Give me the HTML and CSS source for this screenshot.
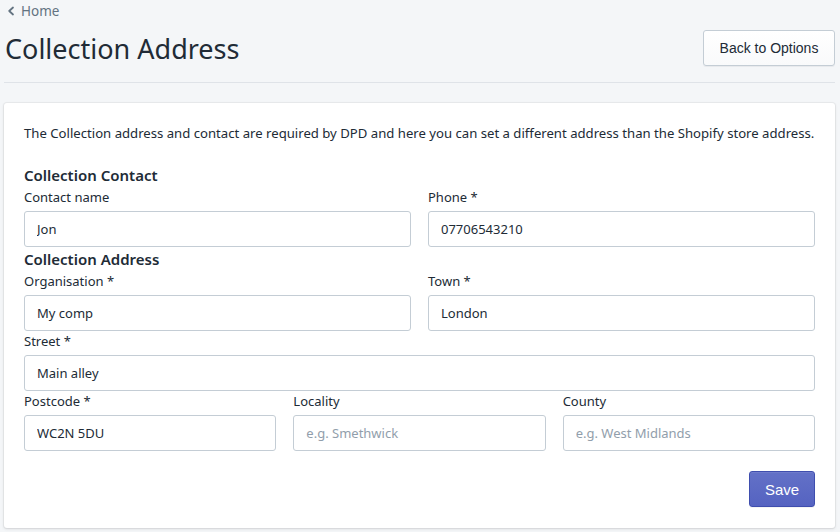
FILE: index.html
```html
<!DOCTYPE html>
<html>
<head>
<meta charset="utf-8">
<link rel="stylesheet" href="styles.css">
</head>
<body>
<div class="page">
  <nav class="breadcrumb">
    <svg class="chev" width="10" height="10" viewBox="0 0 10 10"><path d="M7 1.5 L3.2 5 L7 8.5" fill="none" stroke="#637381" stroke-width="1.8" stroke-linecap="round" stroke-linejoin="round"/></svg>
    <span>Home</span>
  </nav>
  <header class="header">
    <h1 class="title">Collection Address</h1>
    <button class="btn">Back to Options</button>
  </header>
  <div class="divider"></div>
  <section class="card">
    <p class="intro">The Collection address and contact are required by DPD and here you can set a different address than the Shopify store address.</p>
    <h2 class="heading">Collection Contact</h2>
    <div class="row two">
      <div class="field"><label class="label">Contact name</label><input class="input" value="Jon"></div>
      <div class="field"><label class="label">Phone *</label><input class="input" value="07706543210"></div>
    </div>
    <h2 class="heading">Collection Address</h2>
    <div class="row two">
      <div class="field"><label class="label">Organisation *</label><input class="input" value="My comp"></div>
      <div class="field"><label class="label">Town *</label><input class="input" value="London"></div>
    </div>
    <div class="row one">
      <div class="field"><label class="label">Street *</label><input class="input" value="Main alley"></div>
    </div>
    <div class="row three">
      <div class="field"><label class="label">Postcode *</label><input class="input" value="WC2N 5DU"></div>
      <div class="field"><label class="label">Locality</label><input class="input" placeholder="e.g. Smethwick"></div>
      <div class="field"><label class="label">County</label><input class="input" placeholder="e.g. West Midlands"></div>
    </div>
    <div class="actions"><button class="btn primary">Save</button></div>
  </section>
</div>
</body>
</html>
```
FILE: styles.css
```css
html, body { margin: 0; padding: 0; }
body {
  background: #f4f6f8;
  font-family: "Noto Sans", "Open Sans", sans-serif;
  color: #212b36;
  width: 840px;
  height: 532px;
  overflow: hidden;
}
.page { padding: 0 5px 0 4px; }
.breadcrumb {
  display: flex;
  align-items: center;
  gap: 5px;
  height: 22px;
  padding-left: 2px;
  font-size: 13.5px;
  color: #637381;
}
.chev { display: block; }
.header {
  display: flex;
  align-items: center;
  justify-content: space-between;
  margin-top: 8px;
  height: 36px;
}
.title {
  margin: 0;
  font-size: 27px;
  font-weight: 400;
  line-height: 36px;
  padding-left: 1px;
  position: relative;
  top: 1px;
}
.btn {
  font-family: "Liberation Sans", Arial, sans-serif;
  font-size: 14px;
  height: 36px;
  padding: 0;
  white-space: nowrap;
  box-sizing: border-box;
  border-radius: 3px;
  border: 1px solid #c4cdd5;
  background: linear-gradient(#fff, #f9fafb);
  color: #212b36;
  box-shadow: 0 1px 0 0 rgba(22,29,37,.05);
  width: 132px;
}
.divider {
  border-top: 1px solid #dfe3e8;
  margin-top: 16px;
}
.card {
  margin-top: 20px;
  background: #fff;
  border-radius: 3px;
  box-shadow: 0 0 0 1px rgba(63,63,68,.05), 0 1px 3px 0 rgba(63,63,68,.15);
  padding: 20px;
  height: 425px;
  box-sizing: border-box;
}
.intro {
  margin: 0 0 20px;
  font-size: 13.15px;
  line-height: 20px;
  white-space: nowrap;
}
.heading {
  margin: 0;
  font-size: 15px;
  font-weight: 600;
  line-height: 24px;
}
.row { display: grid; gap: 17px; }
.row.two { grid-template-columns: 1fr 1fr; }
.row.one { grid-template-columns: 1fr; }
.row.three { grid-template-columns: 1fr 1fr 1fr; }
.field { display: flex; flex-direction: column; }
.label {
  font-size: 13px;
  line-height: 20px;
  margin-bottom: 4px;
  color: #212b36;
}
.input {
  font-family: "Noto Sans", "Open Sans", sans-serif;
  font-size: 13px;
  height: 36px;
  box-sizing: border-box;
  border: 1px solid #c4cdd5;
  border-radius: 3px;
  padding: 0 12px;
  color: #212b36;
  background: #fff;
  width: 100%;
  outline: none;
}
.input::placeholder { color: #919eab; }
.actions {
  display: flex;
  justify-content: flex-end;
  margin-top: 20px;
}
.btn.primary {
  width: 66px;
  font-size: 15px;
  color: #fff;
  border: 1px solid #3f4eae;
  background: linear-gradient(#6371c7, #5563c1);
  box-shadow: inset 0 1px 0 0 #6f7bcb, 0 1px 0 0 rgba(22,29,37,.05);
}
```
